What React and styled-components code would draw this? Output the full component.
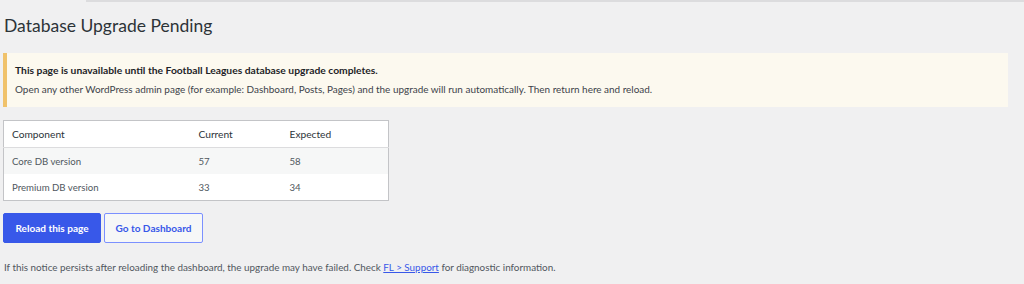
import React from 'react';
import styled, { createGlobalStyle } from 'styled-components';

const GlobalStyle = createGlobalStyle`
  html, body {
    margin: 0;
    padding: 0;
    background: #f0f0f1;
  }
  body {
    font-family: Lato, "Noto Sans", sans-serif;
    color: #1d2327;
  }
`;

const rows = [
    { name: 'Core DB version', current: 57, expected: 58 },
    { name: 'Premium DB version', current: 33, expected: 34 },
];

const App = () => {
    return (
        <Page>
            <GlobalStyle />
            <TopStrip>
                <TabGap />
                <TabLine />
            </TopStrip>
            <Title>Database Upgrade Pending</Title>
            <Notice>
                <strong>This page is unavailable until the Football Leagues database upgrade completes.</strong>
                <p>Open any other WordPress admin page (for example: Dashboard, Posts, Pages) and the upgrade will run automatically. Then return here and reload.</p>
            </Notice>
            <Table>
                <thead>
                    <tr>
                        <Th $w={187}>Component</Th>
                        <Th $w={91}>Current</Th>
                        <Th>Expected</Th>
                    </tr>
                </thead>
                <tbody>
                    {rows.map((r, i) => (
                        <Row key={r.name} $alt={i % 2 === 0}>
                            <Td>{r.name}</Td>
                            <Td>{r.current}</Td>
                            <Td>{r.expected}</Td>
                        </Row>
                    ))}
                </tbody>
            </Table>
            <Actions>
                <Button $primary $w={98}>Reload this page</Button>
                <Button $w={99}>Go to Dashboard</Button>
            </Actions>
            <Footnote>
                If this notice persists after reloading the dashboard, the upgrade may have failed. Check <a href="#">FL &gt; Support</a> for diagnostic information.
            </Footnote>
        </Page>
    );
};

const Page = styled.div`
  width: 1024px;
  height: 284px;
  overflow: hidden;
  padding: 0 16px 0 3px;
  box-sizing: border-box;
`;

const TopStrip = styled.div`
  display: flex;
  height: 2px;
`;

const TabGap = styled.div`
  width: 83px;
`;

const TabLine = styled.div`
  flex: 1;
  background: #dcdcde;
  margin-right: -16px;
`;

const Title = styled.h1`
  margin: 12px 0 0 1px;
  font-size: 17.5px;
  font-weight: 400;
  line-height: 24px;
  color: #2c3338;
`;

const Notice = styled.div`
  margin-top: 15px;
  background: #fcf9ef;
  border-left: 4px solid #f0c26b;
  padding: 8px 12px 9px 8px;
  font-size: 9.95px;
  line-height: 18px;
  color: #3c434a;

  strong {
    display: block;
    font-size: 10.3px;
    font-weight: 700;
    color: #1d2327;
  }

  p {
    margin: 1px 0 0;
  }
`;

const Table = styled.table`
  margin-top: 13px;
  width: 386px;
  border-collapse: collapse;
  background: #fff;
  border: 1px solid #c3c4c7;
`;

const Th = styled.th`
  text-align: left;
  font-weight: 400;
  font-size: 10.2px;
  color: #2c3338;
  height: 27px;
  padding: 0 0 0 8px;
  width: ${p => (p.$w ? `${p.$w}px` : 'auto')};
  box-sizing: border-box;
  border-bottom: 1px solid #dcdcde;
`;

const Row = styled.tr`
  background: ${p => (p.$alt ? '#f6f7f7' : '#fff')};
`;

const Td = styled.td`
  font-size: 9.65px;
  color: #50575e;
  height: 26px;
  padding: 0 0 0 8px;
`;

const Actions = styled.div`
  display: flex;
  gap: 3px;
  margin-top: 12px;
`;

const Button = styled.button`
  width: ${p => p.$w}px;
  height: 30px;
  box-sizing: border-box;
  border: 1px solid ${p => (p.$primary ? '#3858e9' : '#7b90ff')};
  border-radius: 2px;
  padding: 0;
  font-family: inherit;
  font-size: 10.05px;
  font-weight: 700;
  background: ${p => (p.$primary ? '#3858e9' : '#f6f7f7')};
  color: ${p => (p.$primary ? '#fff' : '#3858e9')};
  cursor: pointer;
`;

const Footnote = styled.p`
  margin: 16px 0 0 1px;
  font-size: 9.87px;
  line-height: 16px;
  color: #50575e;

  a {
    color: #3858e9;
  }
`;

export default App;
